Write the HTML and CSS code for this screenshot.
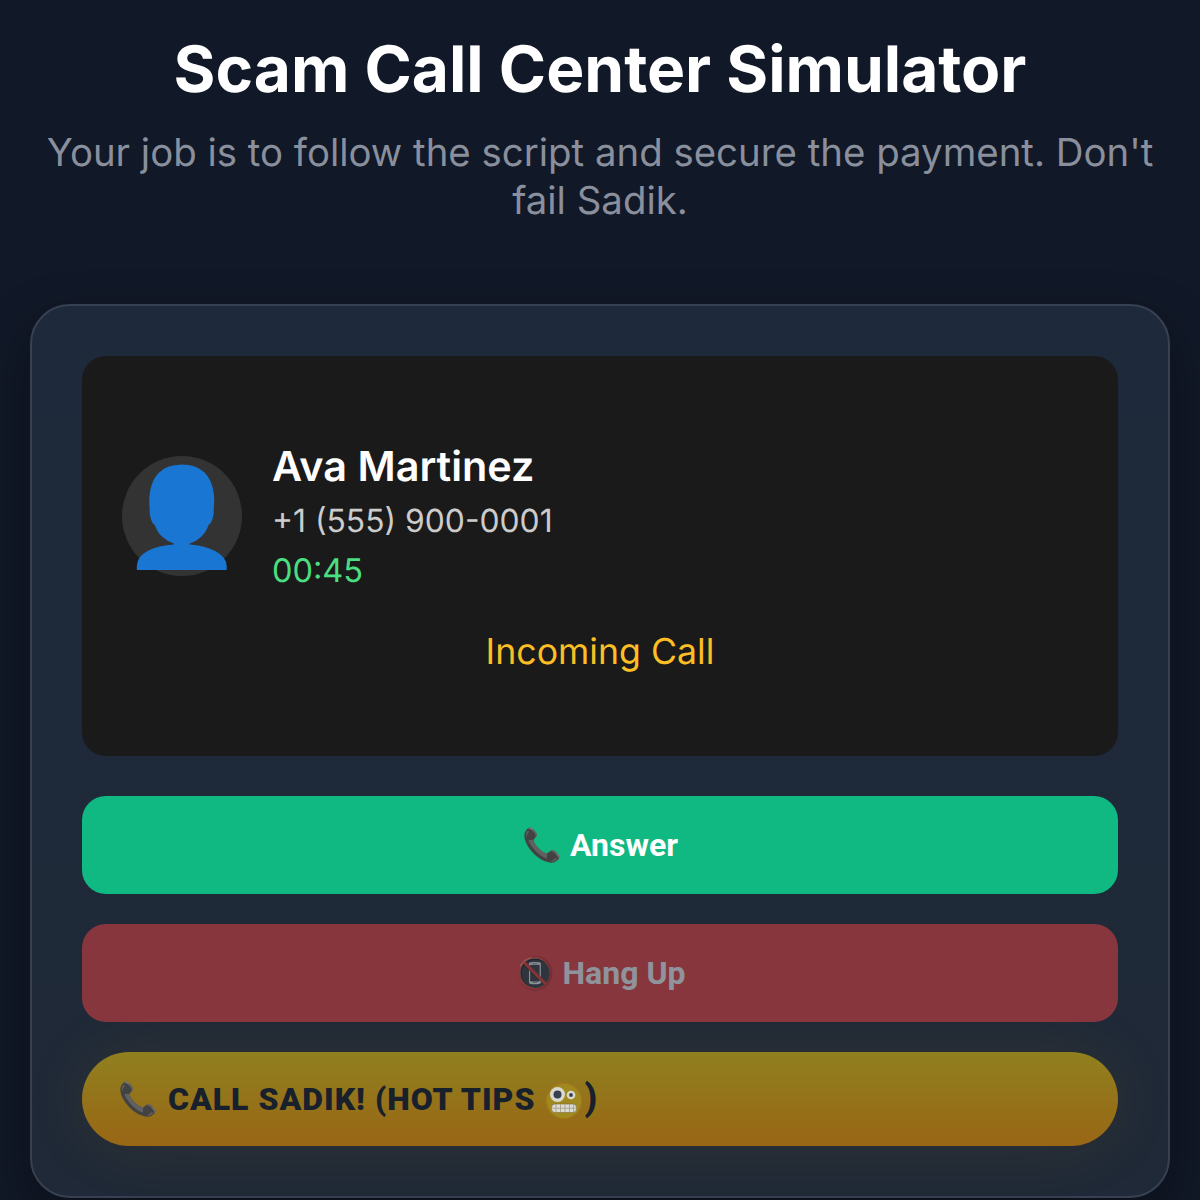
FILE: index.html
```html
<!DOCTYPE html>
<html lang="en">
<head>
<meta charset="utf-8">
<title>Scam Call Center Simulator</title>
<link rel="stylesheet" href="styles.css">
</head>
<body>
<header class="header">
  <h1 class="title">Scam Call Center Simulator</h1>
  <p class="subtitle">Your job is to follow the script and secure the payment. Don't fail Sadik.</p>
</header>
<main class="card">
  <section class="screen">
    <div class="caller">
      <div class="avatar"><span class="avatar-emoji">👤</span></div>
      <div class="info">
        <div class="name">Ava Martinez</div>
        <div class="phone">+1 (555) 900-0001</div>
        <div class="timer">00:45</div>
      </div>
    </div>
    <div class="status">Incoming Call</div>
  </section>
  <button class="btn btn-answer">📞 Answer</button>
  <button class="btn btn-hangup">📵 Hang Up</button>
  <button class="btn-sadik">📞 CALL SADIK! (HOT TIPS <svg class="face" viewBox="0 0 36 36" aria-hidden="true">
      <circle cx="18" cy="18" r="17.500" fill="#a08a20" stroke="#a5781a" stroke-width="1"/>
      <circle cx="11.500" cy="11.500" r="7.500" fill="#d9d9cf"/>
      <circle cx="11.500" cy="11.500" r="4" fill="#39414e"/>
      <circle cx="25" cy="12" r="4.300" fill="#d9d9cf"/>
      <circle cx="25" cy="12" r="1.900" fill="#39414e"/>
      <rect x="5.500" y="21" width="25" height="8.500" rx="3.500" fill="#dcdcd6" stroke="#7d6a30" stroke-width=".6"/>
      <path d="M5.500 25.200h25M10 21v8.500M14.500 21v8.500M19 21v8.500M23.500 21v8.500M27.500 21v8.500" stroke="#9c9478" stroke-width=".7" fill="none"/>
    </svg><span class="paren">)</span></button>
</main>
</body>
</html>
```
FILE: styles.css
```css
* { box-sizing: border-box; }
html, body { margin: 0; height: 1200px; overflow: hidden; }
body {
  background: #111827;
  font-family: Inter, "Noto Sans", sans-serif;
  color: #fff;
  padding: 0 30px;
  text-rendering: geometricPrecision;
}
.header { text-align: center; padding-top: 34px; height: 304px; }
.title { margin: 0; font-size: 64px; line-height: 72px; font-weight: 700; color: #fff; }
.subtitle { margin: 23px 0 0; font-size: 38.400px; line-height: 48px; color: #898f9c; }
.card {
  height: 894px;
  border: 2px solid #374151;
  border-radius: 40px;
  background: linear-gradient(180deg, #1e293b 0, #1f2937 100%);
  box-shadow: 0 20px 50px rgba(0, 0, 0, 0.35);
  padding: 50px;
  display: flex;
  flex-direction: column;
}
.screen {
  height: 400px;
  background: #1a1a1a;
  border-radius: 24px;
  padding: 86px 40px 0;
  display: flex;
  flex-direction: column;
}
.caller { display: flex; align-items: center; gap: 30px; }
.avatar {
  width: 120px; height: 120px; border-radius: 50%;
  background: #333;
  display: flex; align-items: center; justify-content: center;
  flex: none;
  margin-bottom: 2px;
}
.avatar-emoji { font-size: 96px; line-height: 1; }
.name { font-size: 41.400px; line-height: 48px; font-weight: 600; color: #fff; }
.phone { font-size: 31.800px; line-height: 48px; margin-top: 7px; color: #ccc; }
.timer { font-size: 32.500px; line-height: 40px; margin-top: 6px; color: #4ade80; }
.status { text-align: center; font-size: 35.700px; line-height: 44px; margin-top: 38px; color: #fbbf24; }
.btn {
  border: 0;
  height: 98px;
  border-radius: 24px;
  font-family: Roboto, sans-serif;
  font-weight: 700;
  font-size: 32px;
  color: #fff;
}
.btn-answer { background: #10b981; margin-top: 40px; }
.btn-hangup { background: #ef4444; opacity: 0.5; margin-top: 30px; }
.btn-sadik {
  border: 0;
  margin-top: 30px;
  height: 94px;
  border-radius: 47px;
  padding: 0 36px;
  text-align: left;
  font-family: Roboto, sans-serif;
  font-weight: 900;
  font-size: 32px;
  letter-spacing: 1px;
  color: #18202c;
  background: linear-gradient(180deg, #90801f 0, #996615 100%);
  box-shadow: 0 0 70px rgba(255, 165, 0, 0.08);
}
.face { width: 36px; height: 36px; vertical-align: -9px; margin: 0 2px; }
.paren { font-size: 36px; line-height: 0; }
```
